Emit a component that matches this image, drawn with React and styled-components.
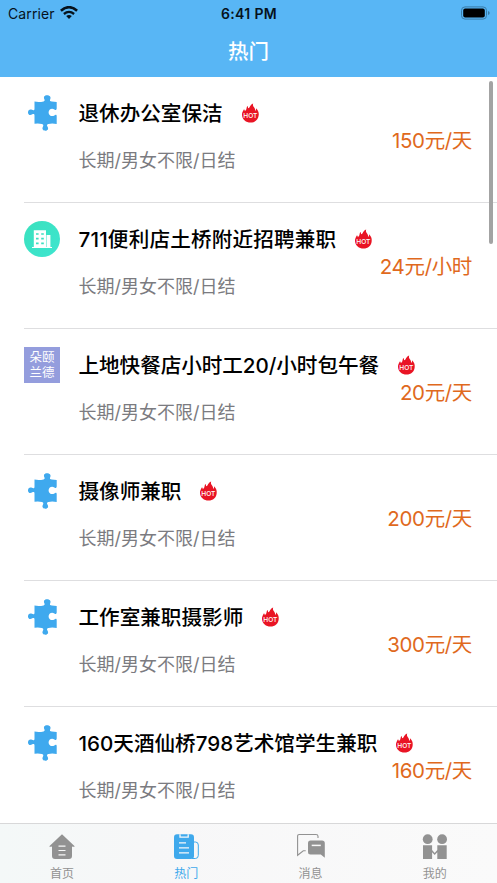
import styled, { createGlobalStyle } from 'styled-components';

const GlobalStyle = createGlobalStyle`
  * {
    box-sizing: border-box;
  }
  body {
    margin: 0;
    background-color: #fff;
    font-family: Inter, 'Noto Sans CJK SC', sans-serif;
  }
`;

const Screen = styled.div`
  position: relative;
  display: flex;
  flex-direction: column;
  width: 497px;
  height: 883px;
  overflow: hidden;
  background-color: #fff;
`;

const Header = styled.header`
  flex: none;
  height: 77px;
  background-color: #58b6f5;
`;

const StatusBar = styled.div`
  display: grid;
  grid-template-columns: 1fr auto 1fr;
  align-items: center;
  height: 25px;
  padding: 0 7px 0 8px;
  color: #06121c;
  font-size: 14px;
  line-height: 25px;
`;

const Carrier = styled.div`
  display: flex;
  align-items: center;
  gap: 5px;
  padding-top: 1px;
  letter-spacing: 0.1px;
  svg {
    margin-top: -2px;
  }
`;

const Clock = styled.div`
  padding-top: 1px;
  font-size: 14px;
  font-weight: 600;
  letter-spacing: 0.35px;
`;

const Battery = styled.div`
  display: flex;
  justify-content: flex-end;
`;

const PageTitle = styled.h1`
  margin: 0;
  color: #fff;
  font-size: 20.5px;
  font-weight: 500;
  line-height: 54px;
  text-align: center;
`;

const JobList = styled.ul`
  flex: 1;
  min-height: 0;
  margin: 0;
  padding: 0 0 0 24px;
  overflow: hidden;
  list-style: none;
`;

const JobItem = styled.li`
  display: flex;
  height: 126px;
  padding: 18px 25px 0 0;
  border-bottom: 1px solid #dedee0;
`;

const Logo = styled.div`
  flex: none;
  width: 36px;
  height: 36px;
  margin-right: 18.5px;
  svg {
    display: block;
  }
`;

const BrandLogo = styled.div`
  width: 36px;
  height: 36px;
  padding-top: 3px;
  background-color: #949ddd;
  color: #fff;
  font-size: 12.5px;
  line-height: 15px;
  text-align: center;
`;

const JobInfo = styled.div`
  flex: 1;
  min-width: 0;
  white-space: nowrap;
`;

const JobName = styled.div`
  display: flex;
  align-items: center;
  gap: 18px;
  height: 36px;
  color: #000;
  font-size: 20.6px;
  font-weight: 500;
  line-height: 36px;
  letter-spacing: ${({ $tracking = 0 }) => $tracking}px;
  span {
    padding-top: 2px;
  }
  svg {
    flex: none;
    letter-spacing: 0;
  }
`;

const JobDesc = styled.div`
  margin-top: 17px;
  color: #7b7b80;
  font-size: 18px;
  line-height: 26px;
`;

const Price = styled.div`
  flex: none;
  width: 0;
  margin-top: 31px;
  display: flex;
  justify-content: flex-end;
  color: #e0691d;
  font-size: 20.5px;
  line-height: 30px;
  letter-spacing: -0.35px;
  white-space: nowrap;
`;

const ScrollThumb = styled.div`
  position: absolute;
  top: 81px;
  right: 4px;
  width: 4px;
  height: 163px;
  border-radius: 2px;
  background-color: #a3a3a3;
`;

const TabBar = styled.nav`
  display: flex;
  flex: none;
  height: 60px;
  border-top: 1px solid #d8d8d9;
  background: linear-gradient(90deg, #f4f8f8, #f7f7f8 30%, #fafafa);
`;

const Tab = styled.div`
  display: flex;
  flex: 1;
  flex-direction: column;
  align-items: center;
  padding-top: 9px;
  color: ${({ $active }) => ($active ? '#3fa9ec' : '#929292')};
  font-size: 12px;
  line-height: 18px;
  svg {
    display: block;
    margin-bottom: 4px;
  }
`;

const WifiIcon = () => (
  <svg width='18' height='13' viewBox='0 0 18 13' fill='none' stroke='#06121c'>
    <path d='M0.9 4.8Q9-2.4 17.1 4.8' strokeWidth='2.6' />
    <path d='M3.9 8Q9 3.7 14.1 8' strokeWidth='2.3' />
    <path d='M6.2 10Q9 7.8 11.8 10L9 12.9Z' fill='#06121c' stroke='none' />
  </svg>
);

const BatteryIcon = () => (
  <svg width='29' height='14' viewBox='0 0 29 14'>
    <rect x='0.5' y='0.9' width='25' height='12.2' rx='3.5' fill='none' stroke='#397ca8' />
    <rect x='2.2' y='2.6' width='21.6' height='8.8' rx='2' fill='#000' />
    <path d='M27 5q1.7 0.5 1.7 2t-1.7 2z' fill='#397ca8' />
  </svg>
);

const PuzzleIcon = () => (
  <svg width='36' height='36' viewBox='0 0 36 36' fill='#3fa9ee'>
    <path d='M10.5 6.6Q15 7.6 19.6 6.4Q21.4 5.8 20.4 4.2C19.2 1.8 20.5 0.2 23 0.2S27.4 1.8 26.2 4.2C25.5 5.8 26.2 6.4 27.8 6.5L32.7 7V13.3C32.7 15.2 31.6 15.3 30.4 14.4C27.5 12.6 24.6 14.6 24.6 17.4S27.6 22.2 30.4 20.4C31.7 19.4 32.7 19.7 32.7 21.3V29Q28 28.1 24.3 29C22.4 29.4 22.9 30.7 23.7 32C24.8 34.2 23.5 35.7 21.3 35.7S17.8 34 18.8 32C19.6 30.5 19.6 29.4 18 29Q14.5 28 10.5 28.7V20.6C10.5 18.8 9.3 18.8 8 19.5C5.7 20.7 4 19.5 4 17.4S5.7 13.7 8 14.8C9.3 15.5 10.5 15.3 10.5 13.7Z' />
  </svg>
);

const BuildingIcon = () => (
  <svg width='36' height='36' viewBox='0 0 36 36'>
    <defs>
      <linearGradient id='mint' x1='0' y1='0' x2='1' y2='1'>
        <stop offset='0' stopColor='#3ae1bd' />
        <stop offset='1' stopColor='#3de5d0' />
      </linearGradient>
    </defs>
    <circle cx='18' cy='18' r='18' fill='url(#mint)' />
    <path d='M9.8 9.3H22V26H9.8ZM22.5 14H26.4V26H22.5ZM8 26H28V27H8Z' fill='#fff' />
    <path
      d='M12 13h2.6M17.2 13h2.6M12 17.7h2.6M17.2 17.7h2.6M12 22.3h2.6M17.2 22.3h2.6'
      stroke='#3ddfc0'
      strokeWidth='1.7'
    />
  </svg>
);

const HotIcon = () => (
  <svg width='19' height='20' viewBox='0 0 19 20'>
    <path
      d='M1 12C0.8 9.7 2 8 3 6.2Q4 7 3.8 8.2C6.2 6.8 5.2 4.2 6.5 3Q7.2 4 7 5.3C9.7 4.3 8.5 1.8 12.2 0.4C10.8 3.8 14.8 4.4 14.1 8.1Q15.4 7 15 5.2C17 7 18 9.3 17.7 12C17.4 16.6 14 19.6 9.5 19.6S1.4 16.7 1 12Z'
      fill='#e91424'
    />
    <text
      x='9.4'
      y='15.3'
      fill='#fff'
      fontFamily='Inter, sans-serif'
      fontSize='6.6'
      fontWeight='500'
      textAnchor='middle'
    >
      HOT
    </text>
  </svg>
);

const HomeIcon = () => (
  <svg width='28' height='28' viewBox='0 0 28 28'>
    <path
      d='M14 1.2L26.7 13.2Q26.2 14.3 24 13.5V23Q24 26 21 26H7Q4 26 4 23V13.5Q1.8 14.3 1.3 13.2Z'
      fill='#929292'
    />
    <path d='M10.5 13.2h7M10.5 17.5h7M10.5 21.8h7' stroke='#f7f8f8' strokeWidth='1.2' />
  </svg>
);

const HotTabIcon = () => (
  <svg width='28' height='28' viewBox='0 0 28 28'>
    <path d='M20 9H23.5Q26.3 9 26.3 12V22.5Q26.3 25.5 23.3 25.5H20' fill='none' stroke='#3fa9ec' />
    <rect x='2' y='1.3' width='20' height='24.7' rx='3' fill='#3fa9ec' />
    <path d='M8 1.2V4.2H16.2V1.2M7 9.8H14M7 14.8H17M7 19.8H17' fill='none' stroke='#f6f8fa' strokeWidth='1.3' />
  </svg>
);

const MessageIcon = () => (
  <svg width='28' height='28' viewBox='0 0 28 28'>
    <path
      d='M21 5V3.2Q21 1.5 19 1.5H2.2Q0.6 1.5 0.6 3.2V22.3L6.3 17.8H8.7'
      fill='none'
      stroke='#929292'
      strokeWidth='1.1'
    />
    <path
      d='M13.5 7.4H25Q27.8 7.4 27.8 10.2V24.8L23.8 21.5H13.5Q11 21.5 11 19V10.2Q11 7.4 13.5 7.4Z'
      fill='#929292'
    />
    <path d='M14.7 12.4H23.8' stroke='#f8f8f8' strokeWidth='1.5' />
  </svg>
);

const MineIcon = () => (
  <svg width='28' height='28' viewBox='0 0 28 28' fill='#929292'>
    <circle cx='6.7' cy='6.2' r='4.9' />
    <circle cx='21.1' cy='6.2' r='4.9' />
    <path d='M2 12.3H11.1V17L13.7 20L16.3 17V12.3H25.7V26H16.3V19.3L13.7 22L11.1 19.3V26H2Z' />
  </svg>
);

const logos = {
  puzzle: <PuzzleIcon />,
  building: <BuildingIcon />,
  brand: (
    <BrandLogo>
      朵颐
      <br />
      兰德
    </BrandLogo>
  ),
};

const jobs = [
  { name: '退休办公室保洁', price: '150元/天', logo: 'puzzle' },
  { name: '711便利店土桥附近招聘兼职', price: '24元/小时', logo: 'building', tracking: 0.17 },
  { name: '上地快餐店小时工20/小时包午餐', price: '20元/天', logo: 'brand', tracking: -0.05 },
  { name: '摄像师兼职', price: '200元/天', logo: 'puzzle' },
  { name: '工作室兼职摄影师', price: '300元/天', logo: 'puzzle' },
  { name: '160天酒仙桥798艺术馆学生兼职', price: '160元/天', logo: 'puzzle' },
];

const tabs = [
  { label: '首页', icon: <HomeIcon /> },
  { label: '热门', icon: <HotTabIcon />, active: true },
  { label: '消息', icon: <MessageIcon /> },
  { label: '我的', icon: <MineIcon /> },
];

const App = () => (
  <>
    <GlobalStyle />
    <Screen>
      <Header>
        <StatusBar>
          <Carrier>
            Carrier
            <WifiIcon />
          </Carrier>
          <Clock>6:41 PM</Clock>
          <Battery>
            <BatteryIcon />
          </Battery>
        </StatusBar>
        <PageTitle>热门</PageTitle>
      </Header>
      <JobList>
        {jobs.map((job) => (
          <JobItem key={job.name}>
            <Logo>{logos[job.logo]}</Logo>
            <JobInfo>
              <JobName $tracking={job.tracking}>
                <span>{job.name}</span>
                <HotIcon />
              </JobName>
              <JobDesc>长期/男女不限/日结</JobDesc>
            </JobInfo>
            <Price>{job.price}</Price>
          </JobItem>
        ))}
      </JobList>
      <TabBar>
        {tabs.map((tab) => (
          <Tab key={tab.label} $active={tab.active}>
            {tab.icon}
            {tab.label}
          </Tab>
        ))}
      </TabBar>
      <ScrollThumb />
    </Screen>
  </>
);

export default App;
